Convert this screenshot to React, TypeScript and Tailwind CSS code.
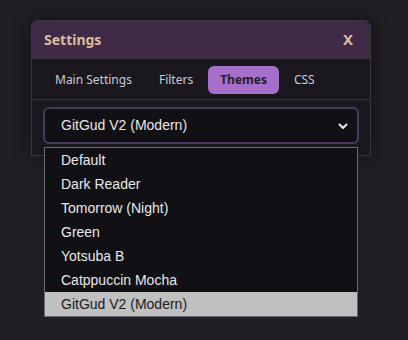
import { useState } from 'react';

const themes = [
    'Default',
    'Dark Reader',
    'Tomorrow (Night)',
    'Green',
    'Yotsuba B',
    'Catppuccin Mocha',
    'GitGud V2 (Modern)',
];

const tabs = ['Main Settings', 'Filters', 'Themes', 'CSS'];

export default function App() {
    const [tab, setTab] = useState('Themes');
    const [theme, setTheme] = useState('GitGud V2 (Modern)');

    return (
        <div className="w-[408px] h-[340px] bg-[#1f1e24] pt-5 pl-[31px] font-['Noto_Sans',sans-serif]">
            <div className="relative w-[340px] rounded-t-md border border-[#38363e] bg-[#1a181e] shadow-[0_0_18px_rgba(0,0,0,0.45)]">
                {/* Header */}
                <div className="flex h-[38px] items-center justify-between rounded-t-md border-b border-[#38363e] bg-[#3f2a47] pl-3 pr-[17px]">
                    <span className="text-[14px] font-bold text-[#dcbc9c]">Settings</span>
                    <span className="text-[15px] font-bold text-[#dcbc9c]">X</span>
                </div>

                {/* Tabs */}
                <div className="flex h-[41px] items-center gap-[3px] border-b border-[#38363e] pl-[11px] pt-[2px]">
                    {tabs.map(t => (
                        <button
                            key={t}
                            onClick={() => setTab(t)}
                            className={`h-[28px] rounded-md px-3 text-[12px] ${t === tab ? 'bg-[#a56fcb] font-bold text-[#25202e]' : 'text-[#c9c9d2]'}`}
                        >
                            {t}
                        </button>
                    ))}
                </div>

                {/* Content */}
                <div className="px-[11px] pt-[7px] pb-[11px]">
                    <div className="flex h-[37px] items-center justify-between rounded-md border-2 border-[#4a3a5b] bg-[#111015] pl-4 pr-2 font-['Liberation_Sans',Arial,sans-serif] text-[14px] text-[#e6e6e6]">
                        <span>{theme}</span>
                        <svg width="12" height="12" viewBox="0 0 12 12" fill="none">
                            <path d="M2.5 4.5 6 8l3.5-3.5" stroke="#e6e6e6" strokeWidth="2" strokeLinecap="round" strokeLinejoin="round" />
                        </svg>
                    </div>
                </div>

                {/* Open native-like dropdown */}
                <div className="absolute left-[12px] top-[126px] w-[314px] border border-[#6b6a70] bg-[#111015] font-['Liberation_Sans',Arial,sans-serif] text-[14px]">
                    {themes.map(t => (
                        <div
                            key={t}
                            onClick={() => setTheme(t)}
                            className={`flex h-6 items-center pl-4 ${t === theme ? 'bg-[#c0c0c0] text-[#1c1c1c]' : 'text-[#e8e8e8]'}`}
                        >
                            {t}
                        </div>
                    ))}
                </div>
            </div>
        </div>
    );
}
